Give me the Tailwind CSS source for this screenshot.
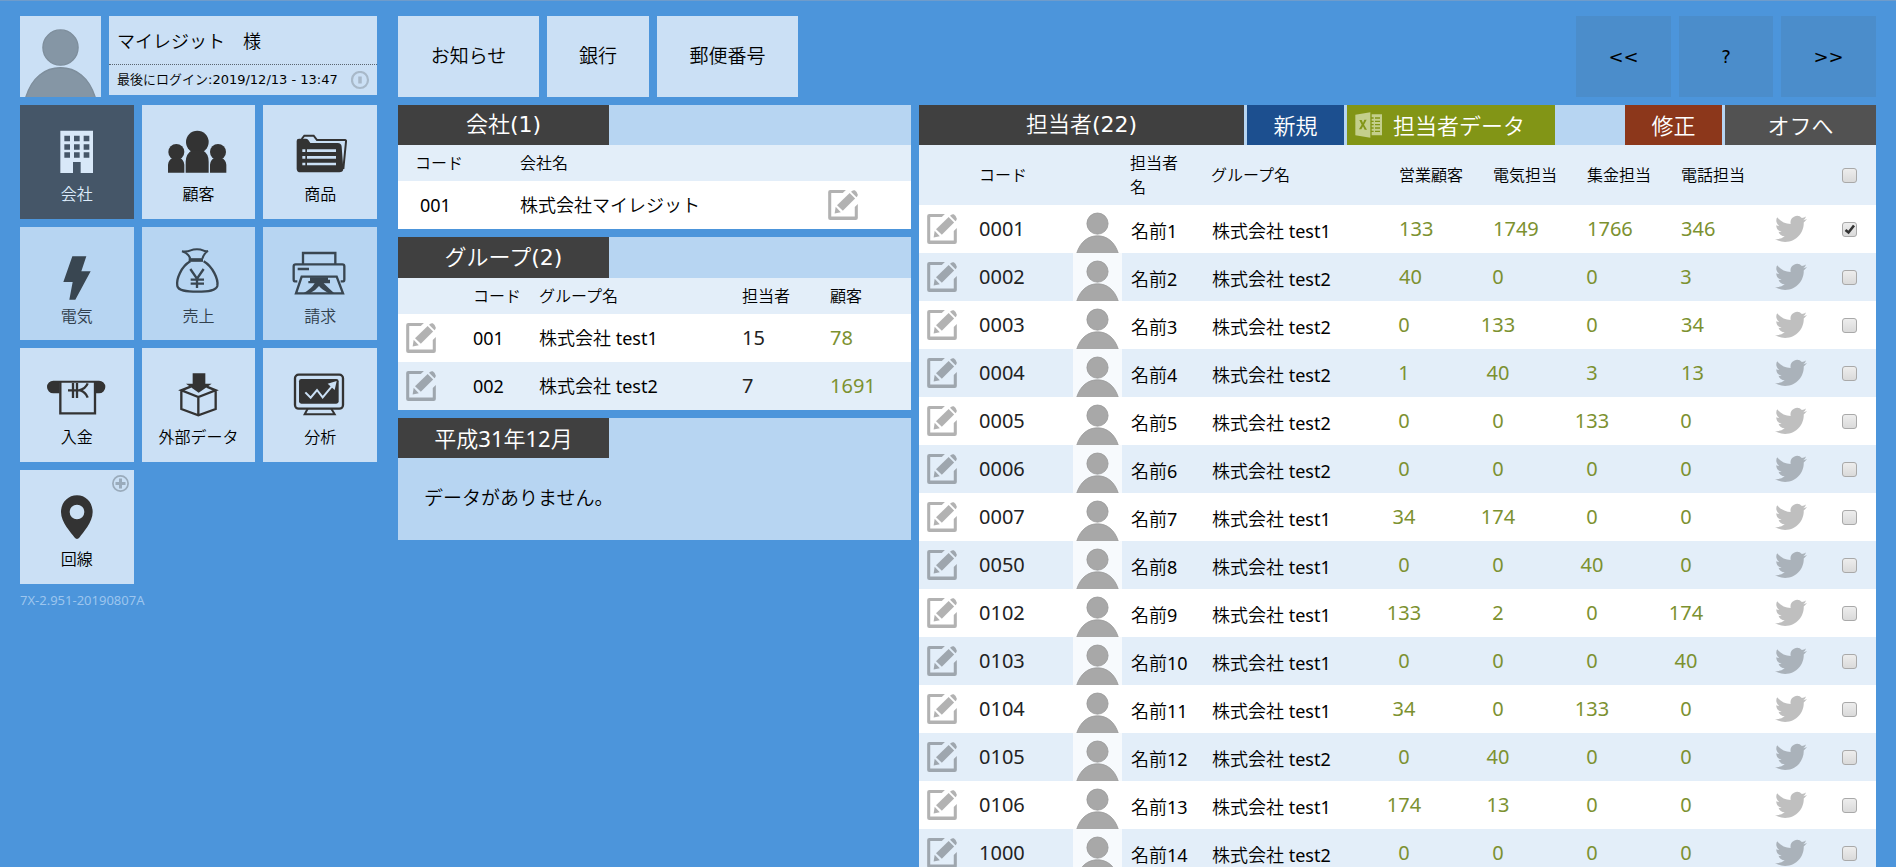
<!DOCTYPE html>
<html lang="ja">
<head>
<meta charset="utf-8">
<meta name="viewport" content="width=device-width, initial-scale=1">
<title>マイレジット</title>
<script src="https://cdn.jsdelivr.net/npm/@tailwindcss/browser@4"></script>
</head>
<body class="bg-[#4c95db] font-['Noto_Sans','Noto_Sans_CJK_JP_DemiLight','Noto_Sans_CJK_JP_Light','Noto_Sans_CJK_JP',sans-serif] text-black">

<!-- shared icons -->
<svg class="hidden" aria-hidden="true">
  <symbol id="edit" viewBox="54 360 87 88">
    <path d="M106 360H60Q54 360 54 366V442Q54 448 60 448H135Q141 448 141 442V401L132 410V438H63V369H97Z"/>
    <path d="M117 369L133 385L97 421L80 405Z"/>
    <path d="M76 409L91 425L73 429Z"/>
    <path d="M121 365Q126 359 132 361Q141 367 141 374Q141 378 137 381Z"/>
  </symbol>
  <symbol id="person" viewBox="59 52 244 240">
    <circle cx="181" cy="145" r="53" stroke-width="4"/>
    <path d="M76 296C95 234 135 206 181 206C227 206 267 234 286 296Z" stroke-width="4"/>
  </symbol>
  <symbol id="bird" viewBox="0 0 24 24">
    <path d="M23.95 4.57a10 10 0 0 1-2.82.78 4.96 4.96 0 0 0 2.16-2.73c-.95.56-2 .96-3.13 1.19a4.92 4.92 0 0 0-8.38 4.48C7.69 8.1 4.07 6.13 1.64 3.16a4.93 4.93 0 0 0 1.52 6.57 4.9 4.9 0 0 1-2.23-.61v.06a4.92 4.92 0 0 0 3.95 4.83 5 5 0 0 1-2.21.08 4.94 4.94 0 0 0 4.6 3.42A9.87 9.87 0 0 1 0 19.54a13.99 13.99 0 0 0 7.55 2.21c9.06 0 14.01-7.5 14.01-13.98 0-.21 0-.42-.02-.63a9.94 9.94 0 0 0 2.46-2.55z"/>
  </symbol>
</svg>

<div class="h-screen overflow-hidden border-t border-[#6f9ccb]">
<div class="grid grid-cols-[357px_minmax(0,534fr)_minmax(0,965fr)] px-5 pt-[15px]">

  <!-- user and main menu -->
  <aside>
    <div class="flex h-[81px] gap-2">
      <svg class="size-[81px] bg-[#cbe0f5] fill-[#8596a5] stroke-[#7e8e9c]"><use href="#person"/></svg>
      <div class="flex h-[79px] grow flex-col bg-[#cbe0f5]">
        <div class="flex h-12 items-center pt-0.5 pl-2 text-lg">マイレジット　様</div>
        <div class="flex grow items-center border-t border-dotted border-[#5a6570] pr-[7px] pl-2 font-['DejaVu_Sans','Noto_Sans_CJK_JP_DemiLight','Noto_Sans_CJK_JP_Light','Noto_Sans_CJK_JP',sans-serif] text-[13px] whitespace-nowrap">
          <span>最後にログイン:2019/12/13 - 13:47</span>
          <svg class="ml-auto size-[19px] fill-none stroke-[#a8b9c9]" viewBox="0 0 19 19"><circle cx="9" cy="9" r="8" stroke-width="2.2"/><path d="M9 5.500V12.500" stroke-width="3.500"/></svg>
        </div>
      </div>
    </div>
    <nav class="mt-2 grid grid-cols-3 gap-2 text-base leading-6">
      <a href="#" class="flex aspect-square flex-col items-center bg-[#455668] pt-[21px] text-[#dcebfa]">
        <svg class="mb-1 h-[52px] w-[60px]" viewBox="140 379 180 156" fill="#d8e8f8"><path fill-rule="evenodd" d="M180 393H278V520H241V487H218V520H180ZM192 408V425H209V408ZM221 408V425H238V408ZM250 408V425H267V408ZM192 434V450H209V434ZM221 434V450H238V434ZM250 434V450H267V434ZM192 458V474H209V458ZM221 458V474H238V458ZM250 458V474H267V458Z"/></svg>
        会社</a>
      <a href="#" class="flex aspect-square flex-col items-center bg-[#cbe0f5] pt-[21px]">
        <svg class="mb-1 h-[52px] w-[60px]" viewBox="506 379 180 156" fill="#333"><circle cx="594" cy="427" r="34"/><circle cx="531" cy="457" r="24"/><circle cx="656" cy="457" r="24"/><path d="M559 519V486Q560 462 578 452H610Q628 462 628 486V519ZM506 519V495Q508 480 520 475H542Q553 480 555 495V519ZM632 519V495Q634 480 645 475H667Q679 480 681 495V519Z"/></svg>
        顧客</a>
      <a href="#" class="flex aspect-square flex-col items-center bg-[#cbe0f5] pt-[21px]">
        <svg class="mb-1 h-[52px] w-[60px]" viewBox="870 379 180 156" fill="none" stroke="#333"><path d="M905 418L913 408H941L951 421H1035Q1039 421 1038 426L1030 508" stroke-width="6"/><path fill="#333" stroke="none" d="M890 424Q890 417 897 417H917Q922 417 925 421L931 430H1013Q1024 430 1025 441L1030 508Q1029 518 1018 518H902Q890 518 890 507Z"/><path d="M921 453H1008M921 473H1008M921 493H1008M907 453H916M907 473H916M907 493H916" stroke="#cbe0f5" stroke-width="8"/></svg>
        商品</a>
      <a href="#" class="flex aspect-square flex-col items-center bg-[#b7d5f2] pt-[21px] text-[#31404d]">
        <svg class="mb-1 h-[52px] w-[60px]" viewBox="140 86 180 156" fill="#394651"><path d="M216 111H258L243 156H271L225 241H207L217 188H189Z"/></svg>
        電気</a>
      <a href="#" class="flex aspect-square flex-col items-center bg-[#b7d5f2] pt-[21px] text-[#31404d]">
        <svg class="mb-1 h-[52px] w-[60px]" viewBox="506 86 180 156" fill="none" stroke="#394651" stroke-width="7"><path d="M573 126C545 142 530 180 534 200C537 214 560 217 594 217C628 217 650 214 654 200C658 180 640 142 613 126"/><path d="M573 118C570 108 560 100 548 96C560 98 568 96 574 93C584 89 602 89 611 93C618 97 622 96 626 95C617 100 612 108 609 118" stroke-width="6"/><path d="M568 122H611" stroke-width="11"/><path d="M573 149L593 178L613 149M593 176V206M574 181H614M574 193H614"/></svg>
        売上</a>
      <a href="#" class="flex aspect-square flex-col items-center bg-[#b7d5f2] pt-[21px] text-[#31404d]">
        <svg class="mb-1 h-[52px] w-[60px]" viewBox="870 86 180 156" fill="none" stroke="#394651" stroke-width="7"><path d="M909 134V101H1006V134M892 186H884Q881 186 881 180V141Q881 135 887 135H1027Q1033 135 1033 141V180Q1033 186 1030 186H1022M893 149H927M905 172H1010L1029 222H888Z"/><path fill="#394651" stroke="none" d="M930 174H984V181H990V192H971Q985 206 1003 222H986Q965 210 957 200Q948 212 930 222H910Q935 208 944 192H925V185H930Z"/></svg>
        請求</a>
      <a href="#" class="flex aspect-square flex-col items-center bg-[#cbe0f5] pt-[21px]">
        <svg class="mb-1 h-[52px] w-[60px]" viewBox="140 449 180 156" fill="none" stroke="#333" stroke-width="7"><path fill="#333" stroke="none" d="M159 484H296A19 19 0 0 1 296 522H287V490H178V522H159A19 19 0 0 1 159 484Z"/><path d="M180 488V582H284V488"/><path d="M203 513H240M218 491V536M230 491V536M236 513Q256 508 262 492M240 513Q256 518 262 535"/></svg>
        入金</a>
      <a href="#" class="flex aspect-square flex-col items-center bg-[#cbe0f5] pt-[21px]">
        <svg class="mb-1 h-[52px] w-[60px]" viewBox="506 449 180 156" fill="none" stroke="#333" stroke-width="7"><path fill="#333" stroke="none" d="M580 462H618V493H637L598 520L560 493H580Z"/><path d="M574 502L546 513L597 533L649 513L622 502M546 513V569L597 588L649 569V513M597 533V588"/></svg>
        外部データ</a>
      <a href="#" class="flex aspect-square flex-col items-center bg-[#cbe0f5] pt-[21px]">
        <svg class="mb-1 h-[52px] w-[60px]" viewBox="870 449 180 156" fill="none" stroke="#333" stroke-width="7"><rect x="885" y="466" width="144" height="102" rx="11"/><rect x="897" y="479" width="119" height="74" rx="7" fill="#333" stroke="none"/><path d="M916 519L932 535L951 512L968 534L998 498" stroke="#cbe0f5" stroke-width="6"/><path d="M983 493L1010 485L1004 512Z" fill="#cbe0f5" stroke="none"/><path d="M923 568L914 585H1004L994 568" stroke-width="6"/></svg>
        分析</a>
      <a href="#" class="relative flex aspect-square flex-col items-center bg-[#cbe0f5] pt-[21px]">
        <svg class="mb-1 h-[52px] w-[60px]" viewBox="140 125 180 156" fill="#333"><path fill-rule="evenodd" d="M230 138C257 138 277 160 277 188C277 220 247 250 238 264Q230 274 222 264C213 250 182 220 182 188C182 160 203 138 230 138ZM230 166A22 22 0 1 0 230 210A22 22 0 0 0 230 166Z"/></svg>
        回線
        <svg class="absolute top-[5px] right-[5px] size-[17px] fill-none stroke-[#9aabbb]" viewBox="0 0 17 17"><circle cx="8.500" cy="8.500" r="7.600" stroke-width="1.700"/><path d="M8.500 3.500V13.500M3.500 8.500H13.500" stroke-width="3"/></svg>
      </a>
    </nav>
    <p class="mt-2 text-[13px] leading-4 text-[#9cc5ee]">7X-2.951-20190807A</p>
  </aside>

  <!-- company, groups, month -->
  <main class="ml-[21px]">
    <div class="flex h-[81px] gap-2 text-[19px]">
      <button class="w-[141px] bg-[#cbe0f5]">お知らせ</button>
      <button class="w-[102px] bg-[#cbe0f5]">銀行</button>
      <button class="w-[141px] bg-[#cbe0f5]">郵便番号</button>
    </div>

    <section class="mt-2 bg-[#b7d5f2]">
      <h2 class="h-10 w-[211px] bg-[#404040] text-center font-['DejaVu_Sans','Noto_Sans_CJK_JP_DemiLight','Noto_Sans_CJK_JP_Light','Noto_Sans_CJK_JP',sans-serif] text-[22px] leading-10 text-white">会社(1)</h2>
      <table class="w-full table-fixed text-left">
        <colgroup><col class="w-[122px]"><col class="w-[308px]"><col></colgroup>
        <thead><tr class="h-9 bg-[#e3eef9] text-base leading-6"><th class="p-0 pl-[17px] font-normal">コード</th><th class="p-0 font-normal">会社名</th><td></td></tr></thead>
        <tbody><tr class="h-12 bg-white text-lg leading-6"><td class="pl-[22px]">001</td><td>株式会社マイレジット</td><td><button class="block" aria-label="編集"><svg class="size-[30px] fill-black/30"><use href="#edit"/></svg></button></td></tr></tbody>
      </table>
    </section>

    <section class="mt-2 bg-[#b7d5f2]">
      <h2 class="h-[41px] w-[211px] bg-[#404040] text-center font-['DejaVu_Sans','Noto_Sans_CJK_JP_DemiLight','Noto_Sans_CJK_JP_Light','Noto_Sans_CJK_JP',sans-serif] text-[22px] leading-[41px] text-white">グループ(2)</h2>
      <table class="w-full table-fixed text-left">
        <colgroup><col class="w-[75px]"><col class="w-[66px]"><col class="w-[203px]"><col class="w-[88px]"><col></colgroup>
        <thead><tr class="h-9 bg-[#e3eef9] text-base leading-6"><td></td><th class="p-0 font-normal">コード</th><th class="p-0 font-normal">グループ名</th><th class="p-0 font-normal">担当者</th><th class="p-0 font-normal">顧客</th></tr></thead>
        <tbody class="text-lg leading-6">
          <tr class="h-12 bg-white"><td class="pl-2"><button class="block" aria-label="編集"><svg class="size-[30px] fill-black/30"><use href="#edit"/></svg></button></td><td>001</td><td>株式会社 test1</td><td class="text-xl leading-6 text-[#222]">15</td><td class="text-xl leading-6"><a href="#" class="text-[#7c9130]">78</a></td></tr>
          <tr class="h-12 bg-[#e3eef9]"><td class="pl-2"><button class="block" aria-label="編集"><svg class="size-[30px] fill-black/30"><use href="#edit"/></svg></button></td><td>002</td><td>株式会社 test2</td><td class="text-xl leading-6 text-[#222]">7</td><td class="text-xl leading-6"><a href="#" class="text-[#7c9130]">1691</a></td></tr>
        </tbody>
      </table>
    </section>

    <section class="mt-2 bg-[#b7d5f2]">
      <h2 class="h-10 w-[211px] bg-[#404040] text-center text-[22px] leading-10 text-white">平成31年12月</h2>
      <p class="pt-[26px] pb-7 pl-[26px] text-[19px] leading-7">データがありません。</p>
    </section>
  </main>

  <!-- staff -->
  <section class="ml-2">
    <div class="flex h-[81px] justify-end gap-2 font-['DejaVu_Sans',sans-serif]">
      <button class="w-[95px] bg-[#4b8dcb] text-lg" aria-label="前へ">&lt;&lt;</button>
      <button class="w-[94px] bg-[#4b8dcb] text-lg" aria-label="ヘルプ">?</button>
      <button class="w-[95px] bg-[#4b8dcb] text-lg" aria-label="次へ">&gt;&gt;</button>
    </div>
    <div class="mt-2 flex h-10 gap-[3px] bg-[#b7d5f2] text-[22px] leading-10 text-white">
      <h2 class="min-w-0 grow bg-[#404040] text-center font-['DejaVu_Sans','Noto_Sans_CJK_JP_DemiLight','Noto_Sans_CJK_JP_Light','Noto_Sans_CJK_JP',sans-serif]">担当者(22)</h2>
      <button class="w-[97px] bg-[#1c4f8f]">新規</button>
      <button class="mr-[67px] flex w-[208px] items-center bg-[#829516] pl-2">
        <svg class="mr-2.5 size-7" viewBox="1334 52 84 78" fill="#c4cf8c"><path fill-rule="evenodd" d="M1380 53V129L1335 122V60ZM1347 76L1354 90L1346 104H1353L1358 95L1363 105H1370L1361 90L1369 75H1362L1358 85L1354 76Z"/><path fill-rule="evenodd" d="M1384 59H1415V122H1384V112H1390V108H1384V102H1390V98H1384V92H1390V88H1384V82H1390V78H1384V72H1390V68H1384ZM1394 68V72H1409V68ZM1394 78V82H1409V78ZM1394 88V92H1409V88ZM1394 98V102H1409V98ZM1394 108V112H1409V108Z"/></svg>
        担当者データ</button>
      <button class="w-[97px] bg-[#8c371b]">修正</button>
      <button class="w-[151px] bg-[#525252]">オフへ</button>
    </div>
    <table class="w-full table-fixed bg-white text-left">
      <colgroup><col class="w-[60px]"><col class="w-[94px]"><col class="w-[49px]"><col class="w-[81px]"><col><col class="w-[94px]"><col class="w-[94px]"><col class="w-[94px]"><col class="w-[94px]"><col class="w-[90px]"><col class="w-[53px]"></colgroup>
      <thead>
        <tr class="h-[60px] bg-[#e3eef9] text-base leading-6">
          <td></td>
          <th class="p-0 font-normal">コード</th>
          <td></td>
          <th class="p-0 pr-5 pl-2 font-normal">担当者名</th>
          <th class="p-0 pl-2 font-normal">グループ名</th>
          <th class="p-0 pl-[42px] font-normal whitespace-nowrap">営業顧客</th>
          <th class="p-0 pl-[42px] font-normal whitespace-nowrap">電気担当</th>
          <th class="p-0 pl-[42px] font-normal whitespace-nowrap">集金担当</th>
          <th class="p-0 pl-[42px] font-normal whitespace-nowrap">電話担当</th>
          <td></td>
          <td><input type="checkbox" aria-label="すべて選択" class="mx-auto block size-[15px] appearance-none rounded-[3px] border border-[#a9a9a9] bg-linear-to-b from-[#ededed] to-[#dadada]"></td>
        </tr>
      </thead>
      <tbody id="staff" class="text-lg leading-6"></tbody>
    </table>
  </section>
</div>
</div>

<script>
// [code, name, group, counts]; a "<" before a count marks it as left-aligned
const staff = [
  ['0001', '名前1', 'test1', ['<133', '<1749', '<1766', '<346']],
  ['0002', '名前2', 'test2', ['<40', '0', '0', '3']],
  ['0003', '名前3', 'test2', ['0', '133', '0', '<34']],
  ['0004', '名前4', 'test2', ['1', '40', '3', '<13']],
  ['0005', '名前5', 'test2', ['0', '0', '133', '0']],
  ['0006', '名前6', 'test2', ['0', '0', '0', '0']],
  ['0007', '名前7', 'test1', ['34', '174', '0', '0']],
  ['0050', '名前8', 'test1', ['0', '0', '40', '0']],
  ['0102', '名前9', 'test1', ['133', '2', '0', '174']],
  ['0103', '名前10', 'test1', ['0', '0', '0', '40']],
  ['0104', '名前11', 'test1', ['34', '0', '133', '0']],
  ['0105', '名前12', 'test2', ['0', '40', '0', '0']],
  ['0106', '名前13', 'test1', ['174', '13', '0', '0']],
  ['1000', '名前14', 'test2', ['0', '0', '0', '0']],
];
const count = v => v[0] === '<'
  ? `<td class="pl-[42px] text-left text-xl leading-6"><a href="#" class="text-[#7c9130]">${v.slice(1)}</a></td>`
  : `<td class="text-center text-xl leading-6"><a href="#" class="text-[#7c9130]">${v}</a></td>`;
document.getElementById('staff').innerHTML = staff.map(([code, name, group, counts], i) => `
  <tr class="h-12 odd:bg-white even:bg-[#e3eef9]">
    <td class="pl-2"><button class="block" aria-label="${name}を編集"><svg class="size-[30px] fill-black/30"><use href="#edit"/></svg></button></td>
    <td class="text-xl leading-6 text-[#222]">${code}</td>
    <td class="p-0"><svg class="block h-12 w-full bg-white/70 fill-[#a8a8a8] stroke-[#999]"><use href="#person"/></svg></td>
    <td class="pt-1 pl-[9px] whitespace-nowrap">${name}</td>
    <td class="pt-1 pl-[9px] whitespace-nowrap">株式会社 ${group}</td>
    ${counts.map(count).join('')}
    <td class="pl-[42px]"><a href="#" class="block w-8" aria-label="Twitter"><svg class="size-8 fill-black/25"><use href="#bird"/></svg></a></td>
    <td><div class="relative mx-auto size-[15px]"><input type="checkbox" aria-label="${name}を選択" ${i === 0 ? 'checked' : ''} class="peer block size-[15px] appearance-none rounded-[3px] border border-[#a9a9a9] bg-linear-to-b from-[#ededed] to-[#dadada]"><svg class="pointer-events-none absolute inset-0 hidden size-[15px] fill-none stroke-[#333] peer-checked:block" viewBox="0 0 15 15"><path d="M3.500 8L6.500 10.500L12 3.500" stroke-width="2.600"/></svg></div></td>
  </tr>`).join('');
</script>
</body>
</html>
